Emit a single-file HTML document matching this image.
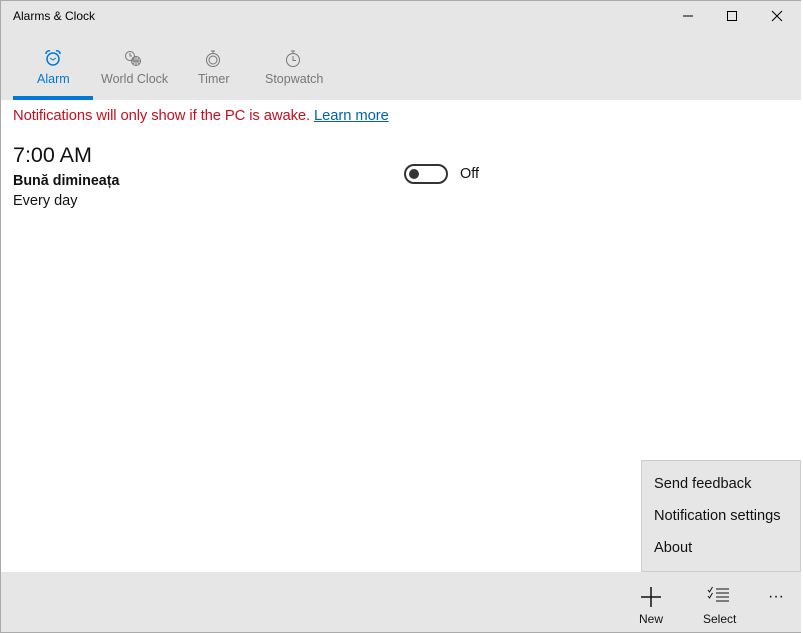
<html><head><style>
body{margin:0;width:803px;height:633px;overflow:hidden;font-family:"Liberation Sans",sans-serif;background:#fff;position:relative}
.a{position:absolute}
.top{left:0;top:0;width:801px;height:100px;background:#e6e6e6;border-left:1px solid #aaa;border-top:1px solid #aaa;box-sizing:border-box}
.tab{font-size:12.5px;color:#777;top:72px}
.bot{left:0;top:572px;width:801px;height:61px;background:#e6e6e6;border-left:1px solid #aaa;border-bottom:1px solid #aaa;box-sizing:border-box}
.menu{left:641px;top:460px;width:160px;height:112px;background:#e6e6e6;border:1px solid #ccc;box-sizing:border-box}
.mi{font-size:14.6px;color:#111;left:654px}
</style></head><body>
<div class="a top"></div>
<div class="a" style="left:0;top:100px;width:1px;height:472px;background:#aaa"></div>
<div class="a" style="left:801px;top:0;width:2px;height:633px;background:#fff"></div>
<div class="a" style="left:13px;top:9px;font-size:12px;color:#000">Alarms &amp; Clock</div>
<svg class="a" style="left:670px;top:0" width="131" height="32"><path d="M13 16h10" stroke="#000"/><rect x="57.5" y="11.5" width="9" height="9" fill="none" stroke="#000"/><path d="M102 11l10 10M112 11l-10 10" stroke="#000"/></svg>
<svg class="a" style="left:44px;top:49px" width="18" height="18"><path d="M2 5a3 3 0 0 1 4-3M16 5a3 3 0 0 0-4-3" stroke="#0078d7" stroke-width="1.5" fill="none"/><circle cx="9" cy="10" r="6" stroke="#0078d7" stroke-width="1.5" fill="none"/><path d="M6 9l3 2 3-2" stroke="#0078d7" fill="none"/></svg>
<svg class="a" style="left:124px;top:50px" width="18" height="17" stroke="#777" fill="none"><circle cx="6" cy="6" r="4.5"/><path d="M6 3v3h2"/><circle cx="12" cy="11" r="4.5"/><path d="M7.5 11h9M12 6.5v9M9.5 8c1 2 1 4 0 6M14.5 8c-1 2-1 4 0 6"/></svg>
<svg class="a" style="left:204px;top:49px" width="18" height="19" stroke="#777" fill="none"><circle cx="9" cy="11" r="6.5"/><circle cx="9" cy="11" r="4"/><path d="M7 2h4M9 2v2"/></svg>
<svg class="a" style="left:284px;top:49px" width="18" height="19" stroke="#777" fill="none"><circle cx="9" cy="11" r="6.5"/><path d="M9 7v4.5h3M7 2h4M9 2v2"/></svg>
<div class="a tab" style="left:37px;color:#0078d7">Alarm</div>
<div class="a tab" style="left:101px">World Clock</div>
<div class="a tab" style="left:198px">Timer</div>
<div class="a tab" style="left:265px">Stopwatch</div>
<div class="a" style="left:13px;top:96px;width:80px;height:4px;background:#0078d7"></div>
<div class="a" style="left:13px;top:108px;font-size:14.8px;color:#c50f1f;letter-spacing:-0.1px">Notifications will only show if the PC is awake. <span style="color:#0063b1;text-decoration:underline">Learn more</span></div>
<div class="a" style="left:13px;top:143px;font-size:21.5px;color:#111">7:00 AM</div>
<div class="a" style="left:13px;top:173px;font-size:14.3px;font-weight:bold;color:#111">Bună dimineața</div>
<div class="a" style="left:13px;top:193px;font-size:14.5px;color:#111">Every day</div>
<div class="a" style="left:404px;top:164px;width:40px;height:16px;border:2px solid #333;border-radius:10px"></div>
<div class="a" style="left:409px;top:169px;width:10px;height:10px;border-radius:5px;background:#333"></div>
<div class="a" style="left:460px;top:166px;font-size:14.5px;color:#111">Off</div>
<div class="a bot"></div>
<div class="a menu"></div>
<div class="a mi" style="top:476px">Send feedback</div>
<div class="a mi" style="top:508px">Notification settings</div>
<div class="a mi" style="top:540px">About</div>
<svg class="a" style="left:640px;top:586px" width="22" height="22"><path d="M11 1v20M1 11h20" stroke="#111" stroke-width="1.5"/></svg>
<div class="a" style="left:639px;top:612px;font-size:12px;color:#111">New</div>
<svg class="a" style="left:707px;top:586px" width="24" height="18" stroke="#111" fill="none"><path d="M1 4l1.5 2 3-5M1 10l1.5 2 3-5"/><path d="M9 3h13M9 7h13M9 11h13M9 15h13"/></svg>
<div class="a" style="left:703px;top:612px;font-size:12px;color:#111">Select</div>
<div class="a" style="left:768px;top:588px;font-size:16px;color:#111">···</div>
</body></html>
